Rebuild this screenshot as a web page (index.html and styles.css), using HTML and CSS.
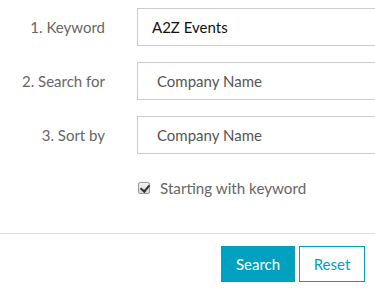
FILE: index.html
```html
<!DOCTYPE html>
<html lang="en">
<head>
  <meta charset="UTF-8">
  <meta name="viewport" content="width=device-width, initial-scale=1.0">
  <title>Search</title>
  <link rel="stylesheet" href="styles.css">
</head>
<body>
  <form class="search-form">
    <div class="field">
      <label for="keyword">1. Keyword</label>
      <input id="keyword" class="value" type="text" value="A2Z Events">
    </div>
    <div class="field">
      <label for="searchFor">2. Search for</label>
      <div class="select">Company Name</div>
    </div>
    <div class="field">
      <label for="sortBy">3. Sort by</label>
      <div class="select">Company Name</div>
    </div>
    <label class="check">
      <input type="checkbox" checked>
      <span>Starting with keyword</span>
    </label>
    <div class="actions">
      <button type="button" class="btn btn-primary">Search</button>
      <button type="reset" class="btn btn-outline">Reset</button>
    </div>
  </form>
</body>
</html>
```

FILE: styles.css
```css
body { margin: 0; font-family: Lato, "Open Sans", sans-serif; font-size: 15px; color: #555; background: #fff; overflow: hidden; }
.search-form { padding-top: 8px; }
.field { display: grid; grid-template-columns: 105px 250px; column-gap: 32px; align-items: center; margin-bottom: 16px; }
.field label { text-align: right; color: #666; }
.value, .select { box-sizing: border-box; height: 38px; border: 1px solid #ccc; padding: 0 14px; font: inherit; display: flex; align-items: center; background: #fff; }
.value { color: #111; outline: none; }
.select { padding-left: 19px; color: #555; }
.check { display: flex; align-items: center; gap: 10px; height: 20px; margin: 24px 0 0 138px; color: #666; font-size: 15.2px; }
.check input { appearance: none; -webkit-appearance: none; position: relative; margin: 0; width: 12px; height: 12px; border: 1px solid #999; border-radius: 2px; background: linear-gradient(#f4f4f4, #d8d8d8); }
.check input:checked::after { content: ""; position: absolute; left: 3px; top: 0; width: 4px; height: 7px; border: solid #333; border-width: 0 2px 2px 0; transform: rotate(40deg); }
.actions { display: flex; justify-content: flex-end; gap: 4px; margin-top: 35px; padding: 12px 10px 0 0; border-top: 1px solid #ddd; }
.btn { box-sizing: border-box; height: 36px; font: inherit; cursor: pointer; }
.btn-primary { width: 74px; background: #00a0c1; color: #fff; border: none; }
.btn-outline { width: 66px; background: #fff; color: #00a0c1; border: 1px solid #00a0c1; }
```
